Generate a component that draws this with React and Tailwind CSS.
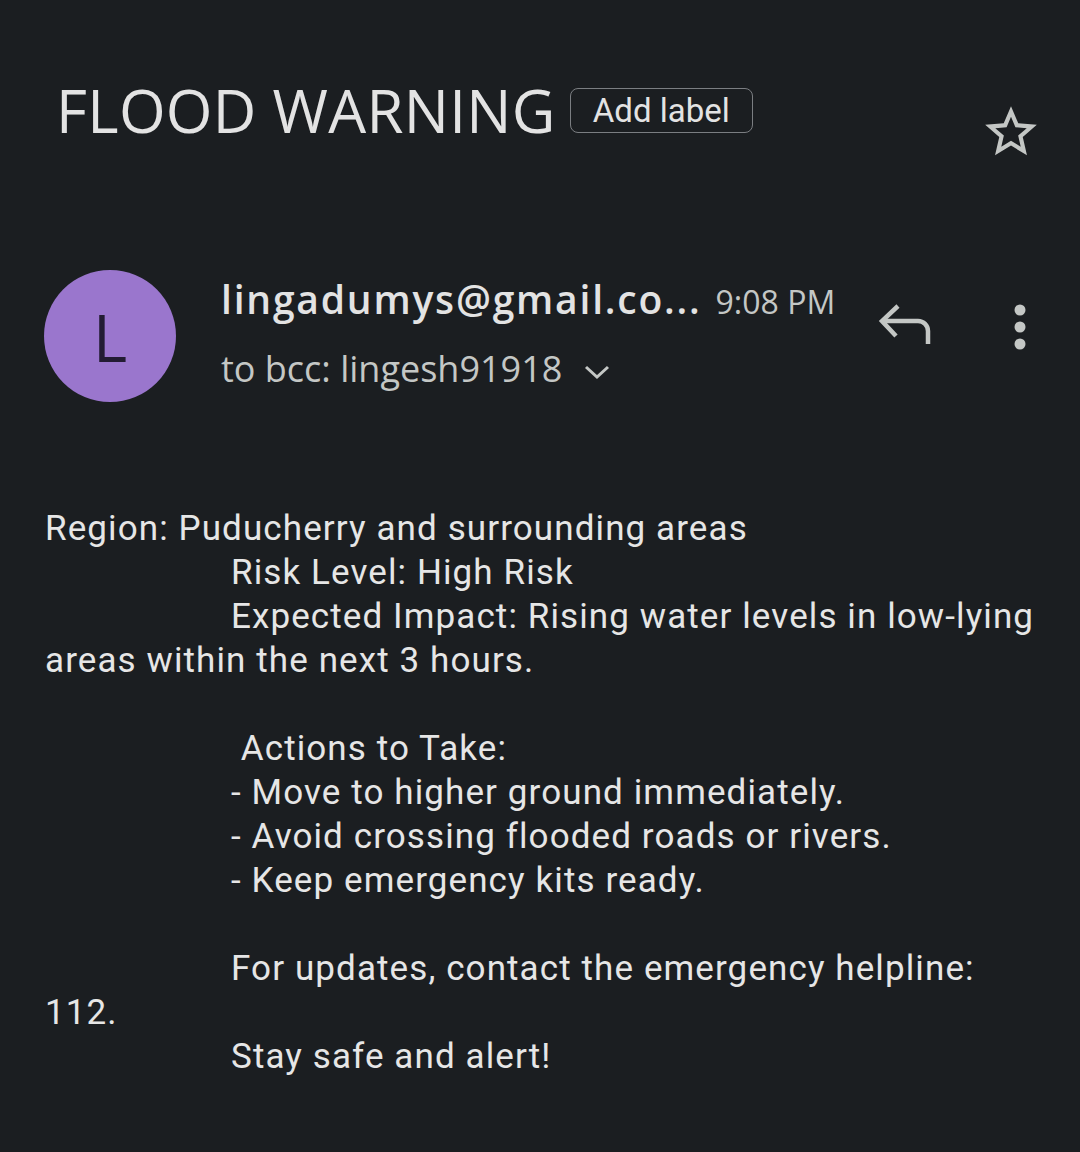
import React from "react";

const body = "font-['Roboto',sans-serif] text-[35px] leading-[44px] tracking-[1.1px] text-[#e6e6e6]";

function Line({ indent, children }) {
  return (
    <div className={indent ? "pl-[186px] whitespace-pre" : "whitespace-pre"}>
      {children === "" ? "\u00a0" : children}
    </div>
  );
}

export default function App() {
  return (
    <div className="w-[1080px] h-[1152px] bg-[#1b1e21] overflow-hidden relative">
      {/* Title row */}
      <div className="flex items-start pt-[70px] pl-[56px] pr-[38px]">
        <div className="font-['Open_Sans',sans-serif] text-[60px] leading-[80px] text-[#e3e3e3] tracking-[0.3px]">
          FLOOD WARNING
        </div>
        <div className="ml-[14px] mt-[18px] h-[45px] px-[22px] flex items-center rounded-[8px] border-[1.5px] border-[#7b7e82] font-['Roboto',sans-serif] text-[33px] text-[#e3e3e3]">
          Add label
        </div>
        <div className="ml-auto mt-[31px]">
          <svg width="62" height="62" viewBox="0 0 24 24" fill="#c4c7c5">
            <path d="M22 9.24l-7.19-.62L12 2 9.19 8.63 2 9.24l5.46 4.73L5.82 21 12 17.27 18.18 21l-1.63-7.03L22 9.24zM12 15.4l-3.76 2.27 1-4.28-3.32-2.88 4.38-.38L12 6.1l1.71 4.04 4.38.38-3.32 2.88 1 4.28L12 15.4z" />
          </svg>
        </div>
      </div>

      {/* Sender row */}
      <div className="flex items-start mt-[107px] pl-[44px] pr-[52px]">
        <div className="w-[132px] h-[132px] rounded-full bg-[#9a76cd] flex items-center justify-center shrink-0">
          <span className="font-['Open_Sans',sans-serif] text-[66px] leading-none text-[#231c33] font-normal">L</span>
        </div>
        <div className="ml-[45px] flex flex-col">
          <div className="flex items-baseline h-[56px]">
            <span className="font-['Open_Sans',sans-serif] font-semibold text-[39px] text-[#e3e3e3] tracking-[1.8px]">
              lingadumys@gmail.co...
            </span>
            <span className="ml-[14px] font-['Open_Sans',sans-serif] text-[32px] text-[#c4c7c5]">9:08 PM</span>
          </div>
          <div className="flex items-center mt-[16px]">
            <span className="font-['Open_Sans',sans-serif] text-[36px] text-[#c4c7c5] tracking-[0px]">to bcc: lingesh91918</span>
            <svg className="ml-[22px] mt-[6px]" width="26" height="16" viewBox="0 0 26 16" fill="none" stroke="#c4c7c5" strokeWidth="3">
              <path d="M2 3l11 10 11-10" />
            </svg>
          </div>
        </div>
        <div className="ml-auto flex items-start mt-[32px]">
          <svg className="mt-[2px]" width="56" height="44" viewBox="0 0 56 44" fill="none" stroke="#c4c7c5" strokeWidth="4.5">
            <path d="M20 2 L4 17 L18 32" />
            <path d="M4 17 H40 a10 10 0 0 1 10 10 V40" />
          </svg>
          <svg className="ml-[78px]" width="16" height="50" viewBox="0 0 16 50" fill="#c4c7c5">
            <circle cx="8" cy="8" r="5.5" />
            <circle cx="8" cy="25" r="5.5" />
            <circle cx="8" cy="42" r="5.5" />
          </svg>
        </div>
      </div>

      {/* Body */}
      <div className={`${body} pl-[45px] mt-[105px]`}>
        <Line>Region: Puducherry and surrounding areas</Line>
        <Line indent>Risk Level: High Risk</Line>
        <Line indent>Expected Impact: Rising water levels in low-lying</Line>
        <Line>areas within the next 3 hours.</Line>
        <Line>{""}</Line>
        <Line indent>{" Actions to Take:"}</Line>
        <Line indent>- Move to higher ground immediately.</Line>
        <Line indent>- Avoid crossing flooded roads or rivers.</Line>
        <Line indent>- Keep emergency kits ready.</Line>
        <Line>{""}</Line>
        <Line indent>For updates, contact the emergency helpline:</Line>
        <Line>112.</Line>
        <Line indent>Stay safe and alert!</Line>
      </div>
    </div>
  );
}
